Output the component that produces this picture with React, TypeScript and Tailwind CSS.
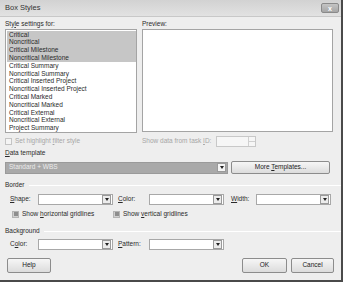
import React from "react"

const items = [
    "Critical",
    "Noncritical",
    "Critical Milestone",
    "Noncritical Milestone",
    "Critical Summary",
    "Noncritical Summary",
    "Critical Inserted Project",
    "Noncritical Inserted Project",
    "Critical Marked",
    "Noncritical Marked",
    "Critical External",
    "Noncritical External",
    "Project Summary",
]

const Arrow: React.FC<{ dark?: boolean }> = ({ dark }) => (
    <div className={"w-[9px] h-[9px] flex items-center justify-center border border-[#9a9a9a] " + (dark ? "bg-[#f4f4f4]" : "bg-[#ececec]")}>
        <div className="w-0 h-0 border-l-[2.5px] border-r-[2.5px] border-t-[3px] border-l-transparent border-r-transparent border-t-[#222]" />
    </div>
)

const Combo: React.FC<{ w: string }> = ({ w }) => (
    <div className={"h-[11px] bg-white border border-[#a8a8a8] flex items-center justify-end pr-[1px] " + w}>
        <Arrow />
    </div>
)

const GrayCheck: React.FC = () => (
    <div className="w-[7px] h-[7px] border border-[#b4b4b4] bg-[#d0d0d0] flex items-center justify-center">
        <div className="w-[4px] h-[4px] bg-[#8e8e8e]" />
    </div>
)

const Button: React.FC<{ w: string; h?: string; children: React.ReactNode }> = ({ w, h, children }) => (
    <div className={"flex items-center justify-center rounded-[2px] border border-[#8c8c8c] bg-gradient-to-b from-[#f6f6f6] to-[#dcdcdc] text-[#222] " + (h ?? "h-[15px]") + " " + w}>
        <span>{children}</span>
    </div>
)

const Group: React.FC<{ label: string }> = ({ label }) => (
    <div className="flex items-center h-[10px] pl-[5px]">
        <span>{label}</span>
        <div className="flex-1 ml-[4px] h-[1px] bg-[#d6d6d6] border-b border-white" />
    </div>
)

const App: React.FC = () => {
    return (
        <div className="w-[343px] h-[282px] bg-[#eeeeee] border-r-2 border-b-2 border-[#4a4a4a] flex flex-col text-[6.5px] leading-none text-[#2a2a2a]" style={{ fontFamily: '"Liberation Sans", Arial, sans-serif' }}>
            {/* title */}
            <div className="h-[17px] shrink-0 flex items-center justify-between pl-[5px] pr-[2px] bg-gradient-to-b from-[#d2d2d2] to-[#e2e2e2] border-b border-[#c8c8c8]">
                <span className="text-[7.5px] text-[#333]">Box Styles</span>
                <div className="w-[18px] h-[10px] rounded-[2px] border border-[#8a8a8a] bg-gradient-to-b from-[#c4c4c4] to-[#a6a6a6] flex items-center justify-center text-white text-[7px] font-bold">x</div>
            </div>

            {/* lists */}
            <div className="flex px-[5px] pt-[3px]">
                <div className="w-[132px] flex flex-col">
                    <div className="h-[9px] flex items-center"><span>Sty<span className="underline">l</span>e settings for:</span></div>
                    <div className="h-[104px] bg-white border border-[#a4a4a4] pt-[1px] pl-[1px]">
                        {items.map((it, i) => (
                            <div key={it} className={"h-[7.8px] flex items-center pl-[2px] " + (i < 4 ? "bg-[#c6c6c6]" : "")}>{it}</div>
                        ))}
                    </div>
                </div>
                <div className="ml-[5px] w-[191px] flex flex-col">
                    <div className="h-[9px] flex items-center">Preview:</div>
                    <div className="h-[103px] bg-white border border-[#a4a4a4]" />
                </div>
            </div>

            {/* highlight row */}
            <div className="flex items-center px-[5px] h-[11px] mt-[3px] text-[#a6a6a6]">
                <div className="w-[132px] flex items-center gap-[3px]">
                    <div className="w-[7px] h-[7px] border border-[#c4c4c4] bg-[#f4f4f4]" />
                    <span>Set highlight <span className="underline">f</span>ilter style</span>
                </div>
                <div className="ml-[5px] flex items-center">
                    <span>Show data from task <span className="underline">I</span>D:</span>
                    <div className="ml-[5px] w-[40px] h-[11px] border border-[#c8c8c8] bg-[#f6f6f6] flex justify-end">
                        <div className="w-[7px] border-l border-[#d0d0d0] flex flex-col">
                            <div className="flex-1 border-b border-[#d0d0d0]" />
                            <div className="flex-1" />
                        </div>
                    </div>
                </div>
            </div>

            {/* data template */}
            <div className="h-[10px] flex items-center px-[5px] mt-[1px]"><span><span className="underline">D</span>ata template</span></div>
            <div className="flex items-center px-[5px] mt-[3px]">
                <div className="w-[223px] h-[12px] bg-[#a9a9a9] border border-[#9a9a9a] flex items-center justify-between pl-[3px] pr-[1px] text-[#ececec]">
                    <span>Standard + WBS</span>
                    <Arrow dark />
                </div>
                <Button w="ml-[3px] w-[99px]" h="h-[13px]">More <span className="underline">T</span>emplates...</Button>
            </div>

            {/* border */}
            <div className="mt-[6px]"><Group label="Border" /></div>
            <div className="flex items-center h-[12px] mt-[3px] pl-[10px]">
                <span className="w-[28px]"><span className="underline">S</span>hape:</span>
                <Combo w="w-[75px]" />
                <span className="ml-[5px] w-[31px]"><span className="underline">C</span>olor:</span>
                <Combo w="w-[75px]" />
                <span className="ml-[7px] w-[25px]"><span className="underline">W</span>idth:</span>
                <Combo w="w-[75px]" />
            </div>
            <div className="flex items-center h-[10px] mt-[4px] pl-[12px]">
                <div className="w-[101px] flex items-center gap-[3px]">
                    <GrayCheck />
                    <span>Show <span className="underline">h</span>orizontal gridlines</span>
                </div>
                <div className="flex items-center gap-[3px]">
                    <GrayCheck />
                    <span>Show <span className="underline">v</span>ertical gridlines</span>
                </div>
            </div>

            {/* background */}
            <div className="mt-[7px]"><Group label="Background" /></div>
            <div className="flex items-center h-[12px] mt-[2px] pl-[10px]">
                <span className="w-[28px]">C<span className="underline">o</span>lor:</span>
                <Combo w="w-[75px]" />
                <span className="ml-[5px] w-[31px]"><span className="underline">P</span>attern:</span>
                <Combo w="w-[75px]" />
            </div>

            {/* buttons */}
            <div className="flex items-center px-[7px] mt-[8px]">
                <Button w="w-[44px]">Help</Button>
                <div className="flex-1" />
                <Button w="w-[45px]">OK</Button>
                <Button w="ml-[4px] w-[43px]">Cancel</Button>
            </div>
        </div>
    )
}

export default App
